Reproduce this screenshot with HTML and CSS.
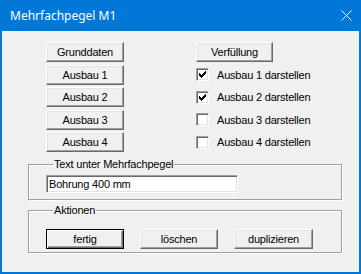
FILE: index.html
```html
<!DOCTYPE html>
<html lang="de">
<head>
  <meta charset="UTF-8">
  <title>Mehrfachpegel M1</title>
  <link rel="stylesheet" href="styles.css">
</head>
<body>
  <div class="window">
    <div class="titlebar">
      <span class="title">Mehrfachpegel M1</span>
      <svg class="close" width="11" height="11" viewBox="0 0 11 11">
        <path d="M0.5 0.5 L10.5 10.5 M10.5 0.5 L0.5 10.5" stroke="#fff" stroke-width="1" fill="none"/>
      </svg>
    </div>

    <div class="client">
      <div class="top-grid">
        <button class="btn">Grunddaten</button>
        <button class="btn btn-narrow">Verfüllung</button>

        <button class="btn">Ausbau 1</button>
        <label class="check"><span class="box"><svg width="7" height="7" viewBox="0 0 7 7" shape-rendering="crispEdges"><path d="M0 2h1v3h-1z M1 3h1v3h-1z M2 4h1v3h-1z M3 3h1v3h-1z M4 2h1v3h-1z M5 1h1v3h-1z M6 0h1v3h-1z" fill="#000"/></svg></span>Ausbau 1 darstellen</label>

        <button class="btn">Ausbau 2</button>
        <label class="check"><span class="box"><svg width="7" height="7" viewBox="0 0 7 7" shape-rendering="crispEdges"><path d="M0 2h1v3h-1z M1 3h1v3h-1z M2 4h1v3h-1z M3 3h1v3h-1z M4 2h1v3h-1z M5 1h1v3h-1z M6 0h1v3h-1z" fill="#000"/></svg></span>Ausbau 2 darstellen</label>

        <button class="btn">Ausbau 3</button>
        <label class="check"><span class="box"></span>Ausbau 3 darstellen</label>

        <button class="btn">Ausbau 4</button>
        <label class="check"><span class="box"></span>Ausbau 4 darstellen</label>
      </div>

      <fieldset class="group group-text">
        <legend>Text unter Mehrfachpegel</legend>
        <input class="edit" type="text" value="Bohrung 400 mm">
      </fieldset>

      <fieldset class="group group-actions">
        <legend>Aktionen</legend>
        <div class="actions">
          <button class="btn btn-default">fertig</button>
          <button class="btn">löschen</button>
          <button class="btn btn-wide">duplizieren</button>
        </div>
      </fieldset>
    </div>
  </div>
</body>
</html>
```

FILE: styles.css
```css
body {
  margin: 0;
  font-family: "Liberation Sans", Arial, sans-serif;
  font-size: 11px;
  letter-spacing: -0.2px;
  color: #000;
}
.window {
  width: 361px;
  height: 274px;
  box-sizing: border-box;
  border: 2px solid #0078d7;
  border-top: none;
  background: #f0f0f0;
  display: flex;
  flex-direction: column;
}
.titlebar {
  height: 31px;
  margin: 0 -2px;
  padding: 0 9px 0 10px;
  background: #0078d7;
  color: #fff;
  display: flex;
  align-items: center;
  justify-content: space-between;
}
.title {
  font-family: "Noto Sans", "Open Sans", sans-serif;
  font-size: 12px;
  letter-spacing: 0;
  padding-bottom: 1px;
}
.close {
  display: block;
  margin-bottom: 1px;
}
.client {
  padding: 11px 0 0 0;
}
.top-grid {
  display: grid;
  grid-template-columns: 78px 1fr;
  grid-auto-rows: 20px;
  column-gap: 72px;
  row-gap: 2.5px;
  padding-left: 44px;
}
.btn {
  width: 78px;
  height: 20px;
  padding: 0;
  box-sizing: border-box;
  font-family: inherit;
  font-size: 11px;
  letter-spacing: -0.2px;
  color: #000;
  background: #f0f0f0;
  border: 1px solid;
  border-color: #fff #696969 #696969 #fff;
  box-shadow: inset -1px -1px 0 #a0a0a0, inset 1px 1px 0 #e3e3e3;
  border-radius: 0;
}
.btn-narrow {
  width: 77px;
}
.btn-wide {
  width: 79px;
}
.btn-default {
  border-color: #000;
  box-shadow: inset 1px 1px 0 #fff, inset -1px -1px 0 #696969, inset -2px -2px 0 #a0a0a0;
}
.check {
  display: flex;
  align-items: center;
}
.box {
  width: 13px;
  height: 13px;
  box-sizing: border-box;
  margin-right: 8px;
  background: #fff;
  border: 1px solid;
  border-color: #a0a0a0 #fff #fff #a0a0a0;
  box-shadow: inset 1px 1px 0 #696969, inset -1px -1px 0 #e3e3e3;
  display: flex;
  align-items: center;
  justify-content: center;
}
.box svg {
  display: block;
}
.group {
  margin: 0 17px 0 26px;
  padding: 0;
  border: 1px solid #a0a0a0;
  box-shadow: inset 1px 1px 0 #fff, 1px 1px 0 #fff;
}
.group legend {
  margin-left: 7px;
  padding: 0 1px;
  line-height: 13px;
}
.group-text {
  margin-top: 6px;
  padding: 4px 0 6px 17px;
}
.edit {
  display: block;
  width: 192px;
  height: 18px;
  box-sizing: border-box;
  padding: 0 2px;
  font-family: inherit;
  font-size: 11px;
  letter-spacing: -0.2px;
  color: #000;
  background: #fff;
  border: 1px solid;
  border-color: #a0a0a0 #fff #fff #a0a0a0;
  box-shadow: inset 1px 1px 0 #696969, inset -1px -1px 0 #e3e3e3;
  outline: none;
}
.group-actions {
  margin-top: 4px;
  padding: 12px 0 3px 17px;
}
.actions {
  display: flex;
  gap: 16px;
}
```
